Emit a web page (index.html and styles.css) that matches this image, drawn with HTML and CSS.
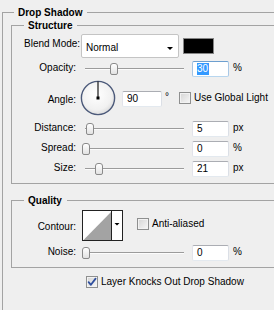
FILE: index.html
```html
<!DOCTYPE html>
<html>
<head>
<meta charset="utf-8">
<title>Drop Shadow</title>
<link rel="stylesheet" href="styles.css">
</head>
<body>
<div class="panel">
  <fieldset class="outer">
    <legend>Drop Shadow</legend>

    <fieldset class="group structure">
      <legend>Structure</legend>
      <div class="rows">
        <div class="row row-blend">
          <span class="label">Blend Mode:</span>
          <div class="select">
            <span class="select-text">Normal</span>
            <svg class="select-arrow" width="6" height="3" viewBox="0 0 6 3"><polygon points="0,0 6,0 3,3" fill="#000"/></svg>
          </div>
          <div class="swatch"></div>
        </div>

        <div class="row row-opacity">
          <span class="label">Opacity:</span>
          <div class="slider"><div class="track"></div><div class="thumb" style="left:29px"></div></div>
          <div class="input focused"><span class="sel">30</span></div>
          <span class="unit">%</span>
        </div>

        <div class="row row-angle">
          <span class="label">Angle:</span>
          <svg class="dial" width="36" height="36" viewBox="0 0 36 36">
            <defs>
              <radialGradient id="dialfill" cx="45%" cy="40%" r="65%">
                <stop offset="0" stop-color="#ffffff"/>
                <stop offset="0.7" stop-color="#f1f1f1"/>
                <stop offset="1" stop-color="#d6d6d6"/>
              </radialGradient>
            </defs>
            <circle cx="18" cy="18" r="16.6" fill="url(#dialfill)" stroke="#4c5a7a" stroke-width="1.4"/>
            <line x1="18" y1="18" x2="18" y2="1.5" stroke="#000" stroke-width="1.1"/>
            <rect x="16.5" y="16.5" width="3" height="3" fill="#000"/>
          </svg>
          <div class="input angle-input">90</div>
          <span class="deg">°</span>
          <div class="check check-global">
            <span class="box"></span>
            <span class="check-text">Use Global Light</span>
          </div>
        </div>

        <div class="row row-distance">
          <span class="label">Distance:</span>
          <div class="slider"><div class="track"></div><div class="thumb" style="left:5px"></div></div>
          <div class="input">5</div>
          <span class="unit">px</span>
        </div>

        <div class="row">
          <span class="label">Spread:</span>
          <div class="slider"><div class="track"></div><div class="thumb" style="left:1px"></div></div>
          <div class="input">0</div>
          <span class="unit">%</span>
        </div>

        <div class="row">
          <span class="label">Size:</span>
          <div class="slider"><div class="track"></div><div class="thumb" style="left:14px"></div></div>
          <div class="input">21</div>
          <span class="unit">px</span>
        </div>
      </div>
    </fieldset>

    <fieldset class="group quality">
      <legend>Quality</legend>
      <div class="rows">
        <div class="row row-contour">
          <span class="label">Contour:</span>
          <svg class="contour" width="41" height="31" viewBox="0 0 41 31">
            <rect x="0.5" y="0.5" width="40" height="30" fill="#fff" stroke="#222"/>
            <polygon points="1.5,30 29.5,1.5 29.5,30" fill="#a3a3a3"/>
            <line x1="29.5" y1="0.5" x2="29.5" y2="30.5" stroke="#222"/>
            <polygon points="32.5,13 37.5,13 35,15.5" fill="#000"/>
          </svg>
          <div class="check check-anti">
            <span class="box"></span>
            <span class="check-text">Anti-aliased</span>
          </div>
        </div>

        <div class="row">
          <span class="label">Noise:</span>
          <div class="slider"><div class="track"></div><div class="thumb" style="left:1px"></div></div>
          <div class="input">0</div>
          <span class="unit">%</span>
        </div>
      </div>
    </fieldset>

    <div class="check knock">
      <span class="box checked">
        <svg width="12" height="12" viewBox="0 0 12 12"><path d="M2.6 6.2 L4.9 8.8 L9.6 2.6" fill="none" stroke="#2f4f9e" stroke-width="1.8" stroke-linejoin="round" stroke-linecap="round"/></svg>
      </span>
      <span class="check-text">Layer Knocks Out Drop Shadow</span>
    </div>
  </fieldset>
</div>
</body>
</html>
```

FILE: styles.css
```css
* {
  box-sizing: border-box;
}

html,
body {
  margin: 0;
  padding: 0;
}

body {
  width: 274px;
  height: 310px;
  overflow: hidden;
  background: #efefef;
  font-family: "Liberation Sans", Arial, sans-serif;
  font-size: 10px;
  color: #000;
}

.panel {
  width: 274px;
  height: 310px;
  overflow: hidden;
}

fieldset {
  margin: 0;
  min-width: 0;
  border: 1px solid #a3a3a3;
}

legend {
  height: 13px;
  line-height: 13px;
  font-weight: bold;
  padding: 0 5px 0 4px;
}

.outer {
  width: 330px;
  margin: 6px 0 0 2px;
  padding: 0 0 60px 8px;
}

.outer > legend {
  margin-left: 3px;
}

.group {
  padding: 2px 0 6px 12px;
}

.quality {
  margin-top: 10px;
  padding-top: 3px;
}

.rows {
  display: flex;
  flex-direction: column;
}

.row {
  display: flex;
  align-items: center;
  height: 16px;
  margin-top: 4px;
}

.row:first-child {
  margin-top: 0;
}

.label {
  flex: none;
  width: 52px;
  margin-right: 5px;
  margin-bottom: 2px;
  text-align: right;
  line-height: 12px;
  white-space: nowrap;
}

/* Blend mode row */
.row-blend {
  height: 24px;
}

.row-blend .label {
  margin-bottom: 4px;
}

.select {
  display: flex;
  align-items: center;
  justify-content: space-between;
  width: 98px;
  height: 24px;
  padding: 3px 5px 0 4px;
  background: #fff;
  border: 1px solid #c4c4c4;
  border-radius: 2px;
}

.select-text {
  line-height: 12px;
}

.select-arrow {
  display: block;
  margin-top: 1px;
}

.swatch {
  width: 31px;
  height: 16px;
  margin-left: 4px;
  margin-bottom: 1px;
  background: #000;
  border: 1px solid #858585;
}

.row-opacity {
  margin-top: 3px;
}

/* Slider */
.slider {
  position: relative;
  flex: none;
  display: flex;
  align-items: center;
  width: 104px;
  height: 16px;
}

.track {
  width: 99px;
  height: 2px;
  margin-left: 4px;
  border-top: 1px solid #9b9b9b;
  border-bottom: 1px solid #fcfcfc;
}

.thumb {
  position: absolute;
  top: 2px;
  width: 8px;
  height: 12px;
  border: 1px solid #8a8a8a;
  border-radius: 3px 3px 2px 2px;
  background: linear-gradient(#ffffff, #e2e2e2);
}

/* Inputs */
.input {
  flex: none;
  width: 37px;
  height: 16px;
  margin-left: 7px;
  padding: 0 0 0 4px;
  line-height: 14px;
  background: #fff;
  border: 1px solid;
  border-color: #abadb3 #dbdfe6 #e3e9ef #e2e3ea;
  border-radius: 2px;
}

.input.focused {
  border-color: #6d9fcf #a9c8e6 #b7d6ef #a4c4e3;
}

.sel {
  display: inline-block;
  padding: 0 1px 0 0;
  line-height: 12px;
  background: #3399ff;
  color: #fff;
  vertical-align: top;
  margin-top: 1px;
}

.unit {
  margin-left: 4px;
  margin-bottom: 2px;
  line-height: 12px;
}

/* Angle row */
.row-angle {
  height: 36px;
  margin-top: 3px;
}

.row-angle .label {
  margin-top: 3px;
  margin-bottom: 0;
}

.dial {
  display: block;
  flex: none;
  margin-left: -1px;
}

.angle-input {
  width: 40px;
  margin-left: 6px;
  margin-top: 1px;
}

.deg {
  align-self: flex-start;
  margin-top: 11px;
  margin-left: 3px;
  line-height: 12px;
}

.check {
  display: flex;
  align-items: center;
  flex: none;
}

.check-global {
  margin-left: 10px;
}

.box {
  display: block;
  flex: none;
  width: 12px;
  height: 12px;
  border: 1px solid #8e8f8f;
  background: linear-gradient(135deg, #d4d4d4, #f7f7f7);
  box-shadow: inset 0 0 0 1px #f2f2f2;
}

.box svg {
  display: block;
  margin: -1px;
}

.check-text {
  margin-left: 3px;
  line-height: 12px;
  white-space: nowrap;
}

.row-distance {
  margin-top: 5px;
}

/* Quality */
.row-contour {
  height: 31px;
}

.row-contour .label {
  margin-top: 3px;
  margin-bottom: 0;
}

.contour {
  display: block;
  flex: none;
  margin-left: 1px;
}

.check-anti {
  align-self: flex-start;
  margin-top: 8px;
  margin-left: 14px;
}

/* Layer knocks out */
.knock {
  height: 12px;
  margin-top: 8px;
  padding-left: 75px;
}
```
